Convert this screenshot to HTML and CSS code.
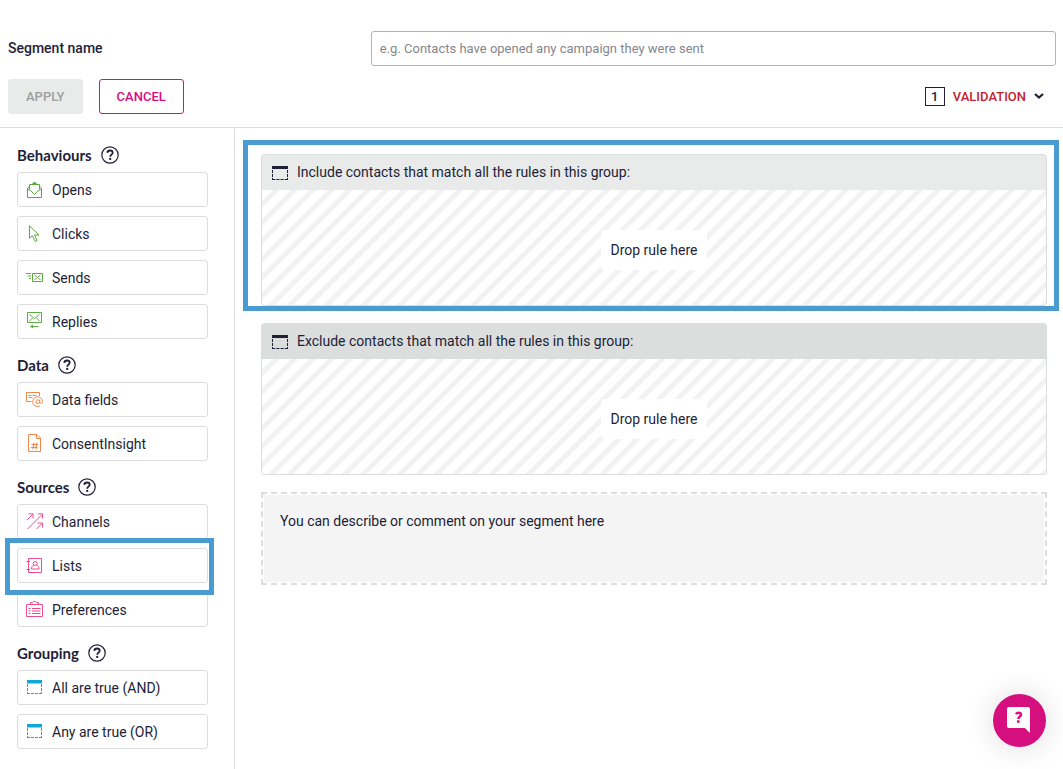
FILE: index.html
```html
<!DOCTYPE html>
<html lang="en">
<head>
<meta charset="utf-8">
<title>Segment builder</title>
<link rel="stylesheet" href="styles.css">
</head>
<body>
<svg class="defs" aria-hidden="true">
  <symbol id="help" viewBox="0 0 18 18">
    <circle cx="9" cy="9" r="8.2" fill="none" stroke="currentColor" stroke-width="1.2"/>
    <path d="M6.3 6.9C6.4 5.2 7.5 4.5 9 4.5c1.600 0 2.700.9 2.700 2.200 0 1.900-2.500 2-2.500 4" fill="none" stroke="currentColor" stroke-width="1.800"/>
    <rect x="8.200" y="11.900" width="2" height="2" fill="currentColor"/>
  </symbol>
  <symbol id="group" viewBox="0 0 18 17">
    <path d="M1 1h15v3.500H1z" fill="currentColor"/>
    <path d="M1.500 5v10M15.500 5v10" fill="none" stroke="currentColor" stroke-dasharray="3 1"/>
    <path d="M1 14.500h15" fill="none" stroke="currentColor" stroke-dasharray="3 1"/>
  </symbol>
  <symbol id="group-large" viewBox="0 0 18 17">
    <path d="M1 2h16v3H1z" fill="currentColor"/>
    <path d="M1.500 6v10M16.500 6v10" fill="none" stroke="currentColor" stroke-dasharray="3 1"/>
    <path d="M1 15.500h16" fill="none" stroke="currentColor" stroke-dasharray="3.250 1"/>
  </symbol>
</svg>

<div class="page">
  <header class="top">
    <div class="name-row">
      <label class="name-label" for="segment-name">Segment name</label>
      <input class="name-input" id="segment-name" type="text" placeholder="e.g. Contacts have opened any campaign they were sent">
    </div>
    <div class="action-row">
      <button class="btn btn-apply" type="button" disabled>APPLY</button>
      <button class="btn btn-cancel" type="button">CANCEL</button>
      <button class="validation" type="button">
        <span class="count">1</span>
        <span>VALIDATION</span>
        <svg class="chevron" viewBox="0 0 10 8" aria-hidden="true"><path d="M1 1l4 3.500L9 1" fill="none" stroke="currentColor" stroke-width="2.200"/></svg>
      </button>
    </div>
  </header>

  <div class="body">
    <aside class="rules">
      <section class="section">
        <h2 class="heading">Behaviours <svg class="help"><use href="#help"/></svg></h2>
        <button class="rule green" type="button">
          <svg class="icon" viewBox="0 0 18 17"><path d="M3.500 5.500L1.500 7v9.500h14V7l-2-1.500M1.500 7.500l2 2M15.500 7.500l-2 2M3.500 8.500v-5h10v5l-5 5zM6.500 3l2-2 2 2"/><path d="M7 1.500h3v2H7z" class="solid"/></svg>
          Opens
        </button>
        <button class="rule green" type="button">
          <svg class="icon" viewBox="0 0 18 17"><path d="M3.500.800v12.400l2.900-2.500 2.800 5.800 2-1-2.700-5.500h4.500z"/></svg>
          Clicks
        </button>
        <button class="rule green" type="button">
          <svg class="icon" viewBox="0 0 18 17"><path d="M0 4.500h5M1.500 7h3.500M3 9.500h2M6.500 4.500h10v8h-10zM8.500 6l3 2.500 3-2.500M8.500 11l2-2M14.500 11l-2-2"/></svg>
          Sends
        </button>
        <button class="rule green" type="button">
          <svg class="icon" viewBox="0 0 18 17"><path d="M1.500-.5h14v10h-14zM3.500 1.500l5 4 5-4M3.500 8l3-3M13.500 8l-3-3M4.500 13.500h8"/><path d="M4 13.500l3-2v4z" class="solid"/></svg>
          Replies
        </button>
      </section>

      <section class="section">
        <h2 class="heading">Data <svg class="help"><use href="#help"/></svg></h2>
        <button class="rule orange" type="button">
          <svg class="icon" viewBox="0 0 18 17"><path d="M5.500 10.500h-5v-9h13v3.500M2.500 4.500h3M6.500 4.500h4M2.500 6.500h4"/><circle cx="11.800" cy="10.700" r="1.900"/><path d="M13.700 8.800v2.400c0 1.500 2.800 1.400 2.800-.7a4.900 4.900 0 1 0-2.300 4.300"/></svg>
          Data fields
        </button>
        <button class="rule orange" type="button">
          <svg class="icon" viewBox="0 0 18 17"><path d="M2.500-.5h8.500l3.500 3.500v13.500h-12zM10.500-.5v4h4M8 7.500l-1 7M11 7.500l-1 7M5.500 9.500h6.700M5 12.500h6.700"/></svg>
          ConsentInsight
        </button>
      </section>

      <section class="section">
        <h2 class="heading">Sources <svg class="help"><use href="#help"/></svg></h2>
        <button class="rule pink" type="button">
          <svg class="icon" viewBox="0 0 18 17"><path d="M1 7l5.500-5.500M2.500.800h4.500v4.500M1.500 16L16 1.500M11.800.800h4.700v4.700M10.500 16l5.500-5.500M11.500 10h5v4.500"/></svg>
          Channels
        </button>
        <div class="marked marked-rule">
          <button class="rule pink" type="button">
            <svg class="icon" viewBox="0 0 18 17"><path d="M2.500 1.500h13v14h-13zM.5 4.500H4M.5 12.500H4"/><circle cx="9.200" cy="6.500" r="2"/><path d="M7.700 8.300c-1.500.4-2.200 1.700-2.200 3.700h7.500c0-2-.700-3.300-2.200-3.700"/></svg>
            Lists
          </button>
        </div>
        <button class="rule pink" type="button">
          <svg class="icon" viewBox="0 0 18 17"><path d="M.5 3.500h16v12H.5zM4.500 3.500V1.500h2l1-1h2l1 1h2v2M2.500 7.500h2M6 7.500h8.500M2.500 10h2M6 10h8.500M2.500 12.500h2M6 12.500h8.500"/></svg>
          Preferences
        </button>
      </section>

      <section class="section">
        <h2 class="heading">Grouping <svg class="help"><use href="#help"/></svg></h2>
        <button class="rule blue" type="button"><svg class="icon" aria-hidden="true"><use href="#group"/></svg>All are true (AND)</button>
        <button class="rule blue" type="button"><svg class="icon" aria-hidden="true"><use href="#group"/></svg>Any are true (OR)</button>
      </section>
    </aside>

    <main class="canvas">
      <div class="marked marked-group">
        <section class="group">
          <h3 class="group-head"><svg class="icon"><use href="#group-large"/></svg>Include contacts that match all the rules in this group:</h3>
          <div class="drop"><span class="drop-label">Drop rule here</span></div>
        </section>
      </div>
      <section class="group">
        <h3 class="group-head group-head-dark"><svg class="icon"><use href="#group-large"/></svg>Exclude contacts that match all the rules in this group:</h3>
        <div class="drop"><span class="drop-label">Drop rule here</span></div>
      </section>
      <div class="comment">
        <textarea class="comment-text" aria-label="Segment description" placeholder="You can describe or comment on your segment here"></textarea>
      </div>
    </main>
  </div>
</div>

<button class="chat" type="button" aria-label="Help chat">
  <svg class="chat-icon" viewBox="0 0 23 26" aria-hidden="true">
    <path d="M2 0h19a2 2 0 0 1 2 2v24l-5-5H2a2 2 0 0 1-2-2V2a2 2 0 0 1 2-2z" fill="#fff"/>
    <path d="M9 7.300c.5-1.100 1.400-1.600 2.500-1.600 1.500 0 2.500.7 2.500 2 0 1.900-2.600 1.700-2.600 4.300" fill="none" stroke="#d60f7f" stroke-width="2.400"/>
    <path d="M10 13.300h2.600v2.500H10z" fill="#d60f7f"/>
  </svg>
</button>
</body>
</html>
```
FILE: styles.css
```css
* {
  box-sizing: border-box;
}

body {
  margin: 0;
  background: #fff;
  color: #221e37;
  font: 14px/20px Roboto, sans-serif;
}

button,
input,
textarea {
  font: inherit;
  color: inherit;
}

button {
  cursor: pointer;
}

.defs {
  position: absolute;
  width: 0;
  height: 0;
}

.page {
  display: flex;
  flex-direction: column;
  min-height: 100vh;
}

.top {
  padding: 31px 7px 13px 8px;
  border-bottom: 1px solid #dcdddd;
}

.name-row {
  display: grid;
  grid-template-columns: 9fr 17fr;
  align-items: center;
}

.name-label {
  padding-bottom: 2px;
  font-weight: 500;
}

.name-input {
  width: 100%;
  height: 35px;
  padding: 0 8px;
  border: 1px solid #b3b5b8;
  border-radius: 3px;
  font-size: 13px;
}

.name-input::placeholder {
  color: #85868c;
  opacity: 1;
}

.action-row {
  display: flex;
  align-items: center;
  gap: 16px;
  margin-top: 13px;
}

.btn {
  height: 35px;
  padding: 0 17px;
  border: 1px solid;
  border-radius: 3px;
  font-size: 13px;
  font-weight: 500;
}

.btn-apply {
  border-color: #e9ebea;
  background: #e9ebea;
  color: #9c9ea0;
}

.btn-cancel {
  border-color: #d60f7f;
  background: #fff;
  color: #d60f7f;
}

.validation {
  display: flex;
  align-items: center;
  gap: 8px;
  margin-left: auto;
  padding: 0 12px 0 0;
  border: 0;
  background: none;
  color: #c41e31;
  font-size: 13px;
  font-weight: 500;
}

.count {
  width: 20px;
  border: 1px solid #221e37;
  color: #221e37;
  line-height: 17px;
}

.chevron {
  width: 10px;
  height: 8px;
  color: #221e37;
}

.body {
  display: flex;
  flex: 1;
}

.rules {
  display: flex;
  flex: none;
  flex-direction: column;
  gap: 17px;
  width: 235px;
  padding: 18px 26px 18px 17px;
  border-right: 1px solid #dcdddd;
}

.section {
  display: flex;
  flex-direction: column;
  gap: 9px;
}

.heading {
  display: flex;
  align-items: center;
  gap: 9px;
  height: 18px;
  margin: 0 0 -1px;
  font: 700 15px/18px Lato, sans-serif;
}

.help {
  width: 18px;
  height: 18px;
}

.rule {
  display: flex;
  align-items: center;
  gap: 8px;
  width: 100%;
  height: 35px;
  padding: 0 8px;
  border: 1px solid #dcdddd;
  border-radius: 3px;
  background: #fff;
  text-align: left;
}

.icon {
  flex: none;
  width: 18px;
  height: 17px;
  overflow: visible;
}

.icon path,
.icon circle {
  fill: none;
  stroke: currentColor;
}

.icon .solid {
  fill: currentColor;
  stroke: none;
}

.green .icon {
  color: #5fa942;
}

.orange .icon {
  color: #f2894a;
}

.pink .icon {
  color: #ec4e8d;
}

.blue .icon {
  color: #12a8d3;
}

.marked {
  position: relative;
}

.marked::after {
  position: absolute;
  z-index: 1;
  border: 5px solid #4a9bd0;
  content: "";
  pointer-events: none;
}

.marked-rule::after {
  inset: -10px -6px -12px -12px;
}

.marked-group::after {
  inset: -14px -12px -5px -18px;
}

.canvas {
  display: flex;
  flex: 1;
  flex-direction: column;
  gap: 17px;
  min-width: 0;
  padding: 26px 16px 26px 26px;
}

.group {
  overflow: hidden;
  border: 1px solid #dcdddd;
  border-radius: 3px;
}

.group-head {
  display: flex;
  align-items: center;
  gap: 8px;
  height: 35px;
  margin: 0;
  padding: 0 9px 1px;
  background: #e9ebea;
  font-size: 14px;
  font-weight: 400;
}

.group-head-dark {
  background: #dcdedd;
}

.drop {
  display: flex;
  align-items: center;
  justify-content: center;
  height: 115px;
  padding-top: 4px;
  background: repeating-linear-gradient(135deg, #fff 0 7px, #f2f2f2 8px 12px, #fff 13px);
}

.drop-label {
  padding: 10px 9px;
  border-radius: 4px;
  background: #fff;
}

.comment {
  display: flex;
  padding: 1px;
  border: 2px dashed #dcdddd;
}

.comment-text {
  width: 100%;
  height: 87px;
  padding: 16px;
  border: 0;
  background: #f4f4f4;
  resize: none;
}

.comment-text::placeholder {
  color: #221e37;
  opacity: 1;
}

.chat {
  position: fixed;
  right: 17px;
  bottom: 22px;
  display: flex;
  align-items: center;
  justify-content: center;
  width: 53px;
  height: 53px;
  padding: 0 2px 2px 0;
  border: 0;
  border-radius: 50%;
  background: #d60f7f;
  box-shadow: 0 1px 30px rgba(0, 0, 0, 0.14);
}

.chat-icon {
  width: 23px;
  height: 26px;
}
```
